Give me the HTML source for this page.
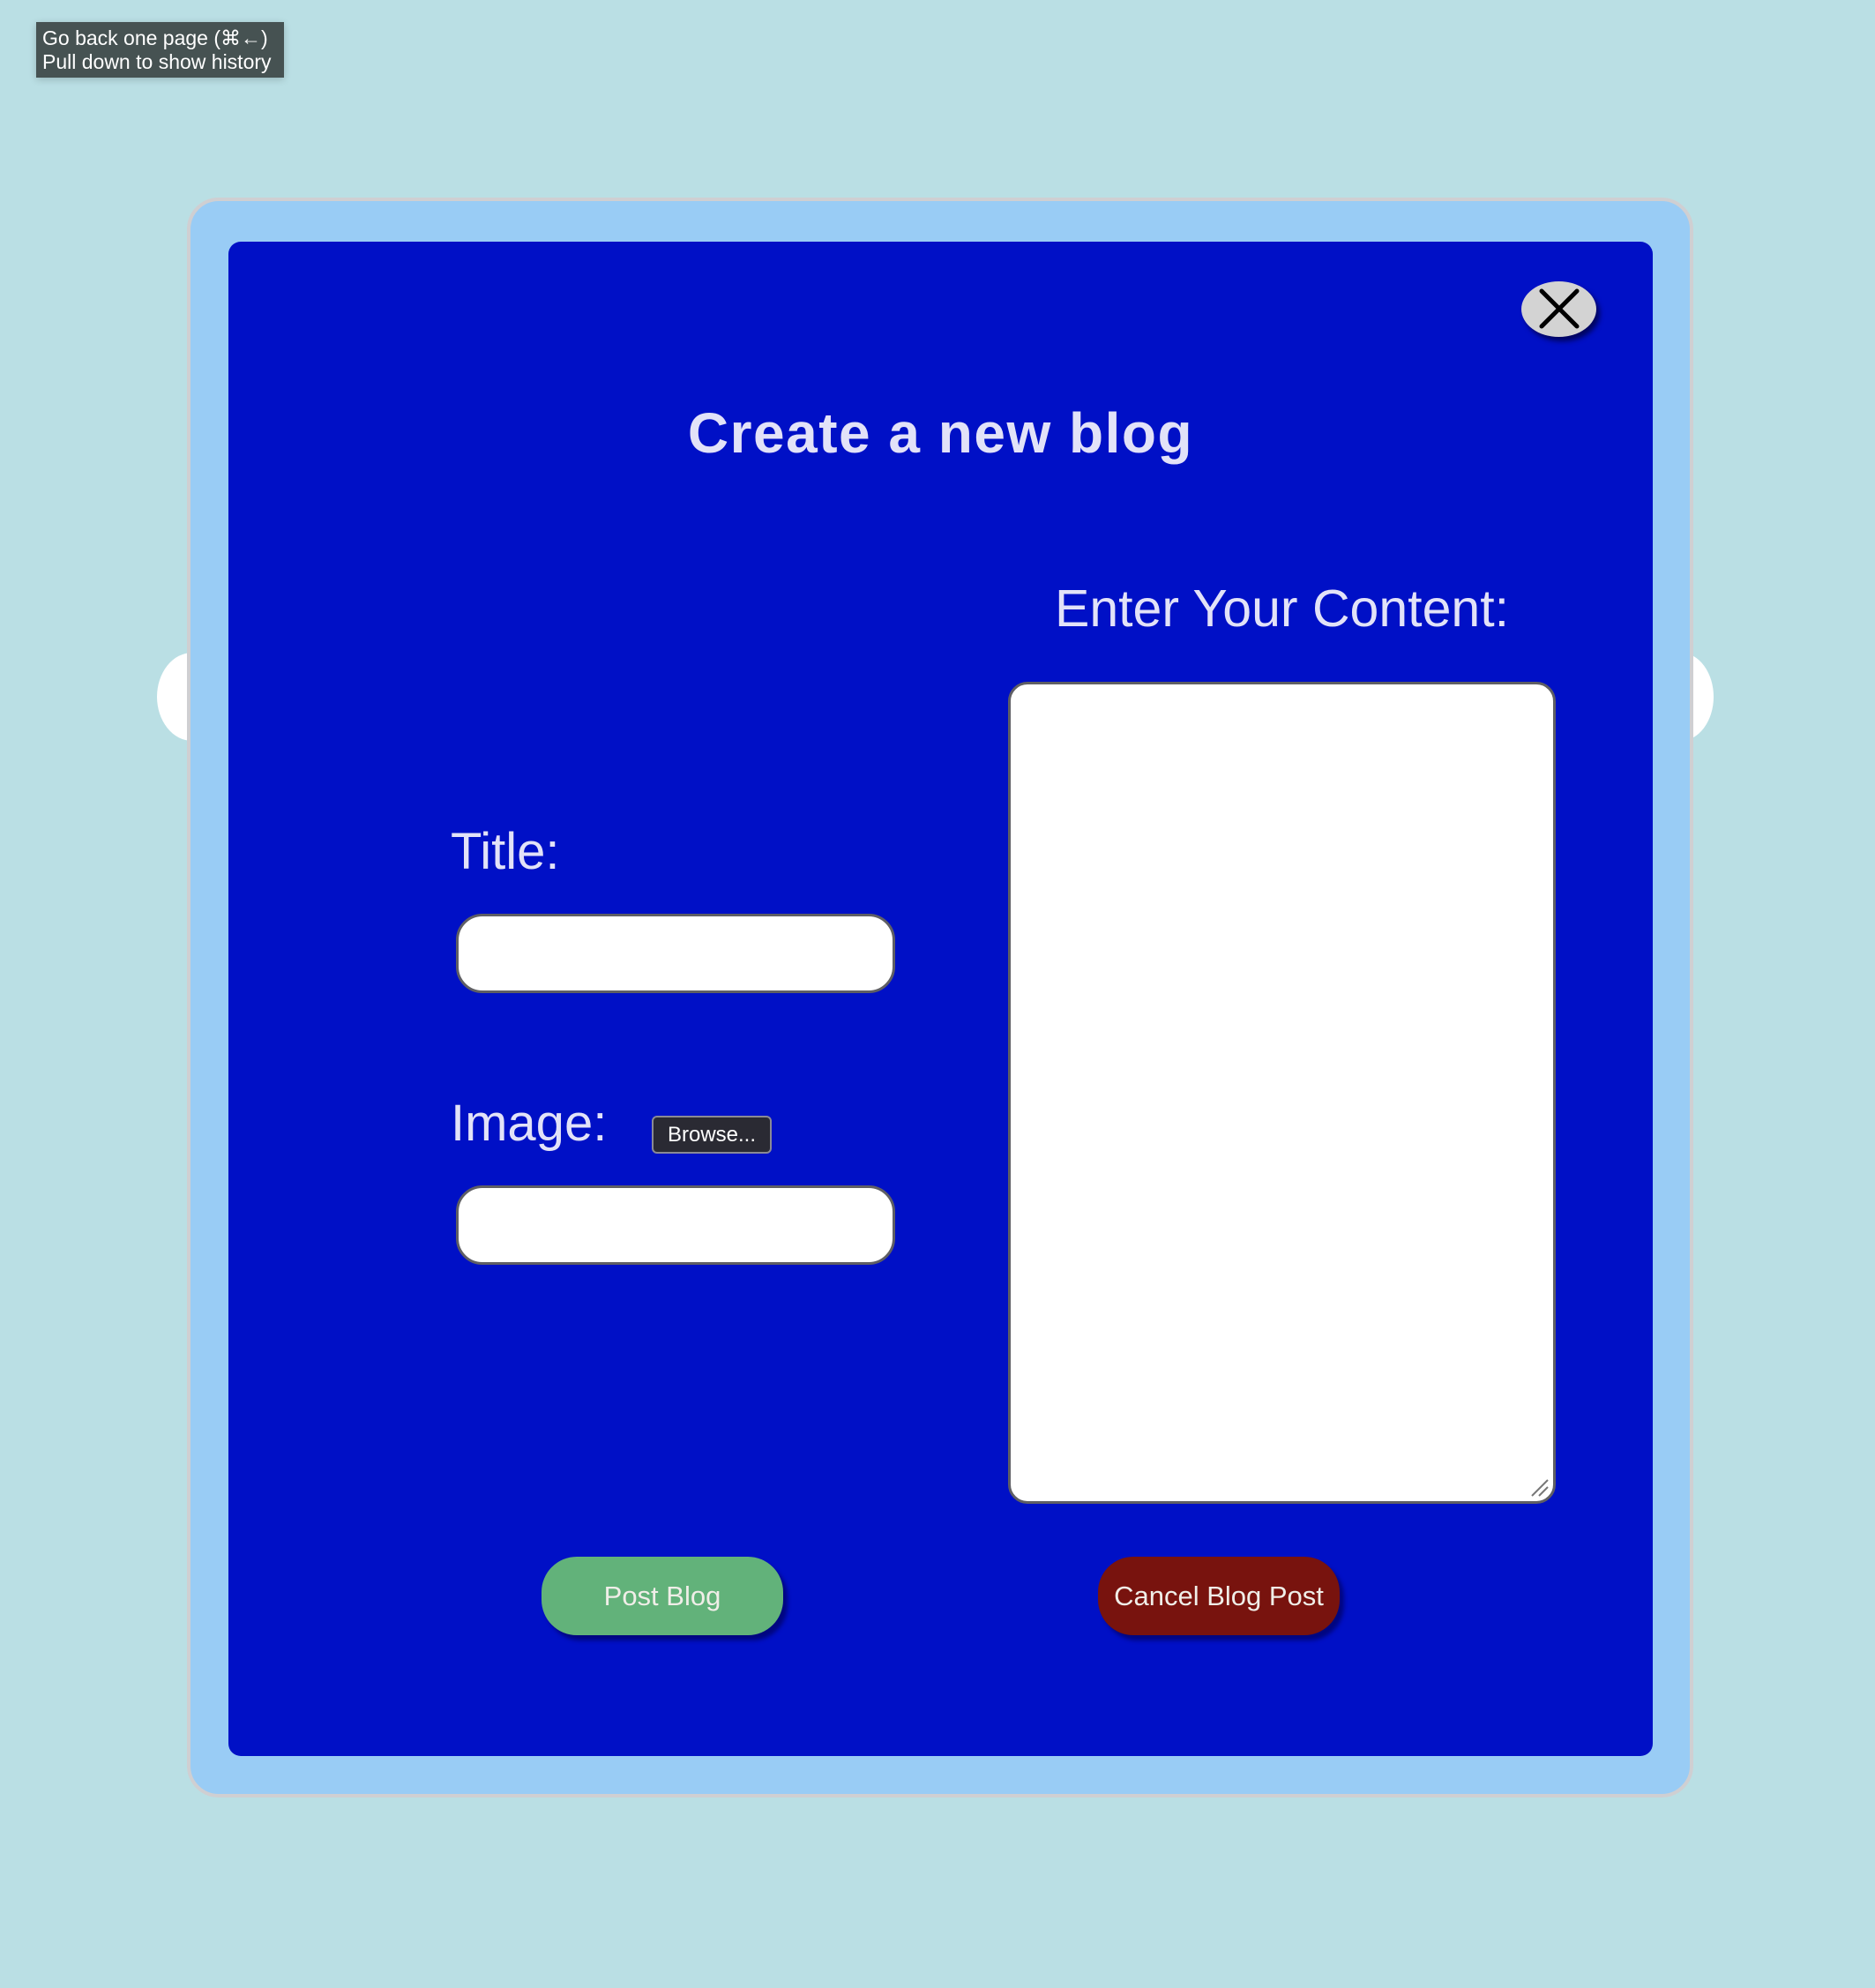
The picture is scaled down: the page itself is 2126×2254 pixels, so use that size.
<!DOCTYPE html>
<html><head><meta charset="utf-8"><style>
html,body{margin:0;padding:0}
body{width:2126px;height:2254px;background:#badfe4;position:relative;overflow:hidden;font-family:"Liberation Sans",sans-serif}
.abs{position:absolute}
.tip{left:41px;top:25px;width:281px;height:63px;background:#465252;color:#fff;font-size:23px;line-height:27px;padding:5px 0 0 7px;box-sizing:border-box;box-shadow:0 2px 8px rgba(0,0,0,.2)}
.side{background:#fff;border-radius:50%}
.outer{left:212px;top:224px;width:1708px;height:1814px;background:#99ccf5;border:4px solid #cfcfd2;border-radius:36px;box-sizing:border-box}
.inner{left:259px;top:274px;width:1615px;height:1717px;background:#0010c6;border-radius:14px}
.close{left:1725px;top:319px;width:85px;height:63px;background:#d3d3d3;border-radius:50%;box-shadow:4px 5px 6px #000560}
.lav{color:#e2e2f8}
.inp{background:#fff;border:3px solid #5f5f64;box-sizing:border-box}
.btn{height:89px;width:274px;border-radius:40px;color:#f0eee8;font-size:31px;text-align:center;line-height:89px;box-shadow:5px 6px 5px #000680}
</style></head><body>
<div class="abs tip">Go back one page (⌘←)<br>Pull down to show history</div>
<div class="abs side" style="left:178px;top:740px;width:80px;height:100px"></div>
<div class="abs side" style="left:1868px;top:740px;width:75px;height:100px"></div>
<div class="abs outer"></div>
<div class="abs inner"></div>
<div class="abs close"><svg width="85" height="63" viewBox="0 0 85 63"><path d="M23 11 L63 51 M63 11 L23 51" stroke="#000" stroke-width="5" stroke-linecap="round"/></svg></div>
<div class="abs lav" style="left:259px;width:1615px;top:454px;text-align:center;font-size:64px;font-weight:bold;letter-spacing:1.5px">Create a new blog</div>
<div class="abs lav" style="left:1143px;width:621px;top:656px;text-align:center;font-size:59px">Enter Your Content:</div>
<div class="abs inp" style="left:1143px;top:773px;width:621px;height:932px;border-radius:22px"></div>
<svg class="abs" style="left:1735px;top:1676px" width="22" height="22"><path d="M2 20 L20 2 M10 20 L20 10" stroke="#777" stroke-width="2"/></svg>
<div class="abs lav" style="left:511px;top:932px;font-size:58px">Title:</div>
<div class="abs inp" style="left:517px;top:1036px;width:498px;height:90px;border-radius:30px"></div>
<div class="abs lav" style="left:511px;top:1240px;font-size:58px">Image:</div>
<div class="abs" style="left:739px;top:1265px;width:136px;height:43px;background:#2a2a33;border:2px solid #8a8a95;border-radius:6px;box-sizing:border-box;color:#fff;font-size:24px;line-height:39px;text-align:center">Browse...</div>
<div class="abs inp" style="left:517px;top:1344px;width:498px;height:90px;border-radius:30px"></div>
<div class="abs btn" style="left:614px;top:1765px;background:#62b27a">Post Blog</div>
<div class="abs btn" style="left:1245px;top:1765px;background:#78130e">Cancel Blog Post</div>
</body></html>
